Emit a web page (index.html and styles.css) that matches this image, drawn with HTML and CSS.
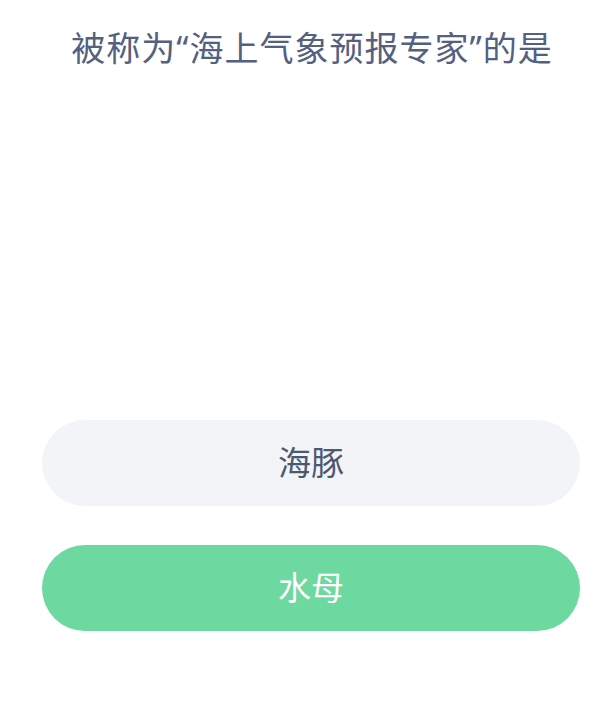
FILE: index.html
```html
<!DOCTYPE html>
<html lang="zh-CN">
<head>
<meta charset="utf-8">
<link rel="stylesheet" href="styles.css">
</head>
<body>
<div class="page">
  <h1 class="question">被称为“海上气象预报专家”的是</h1>
  <div class="picture"></div>
  <div class="options">
    <div class="option option-plain">海豚</div>
    <div class="option option-chosen">水母</div>
  </div>
</div>
</body>
</html>
```
FILE: styles.css
```css
html, body {
  margin: 0;
  padding: 0;
  background: #ffffff;
}
.page {
  width: 612px;
  height: 702px;
  display: flex;
  flex-direction: column;
  font-family: "Noto Sans", "Noto Sans CJK SC", sans-serif;
}
.question {
  margin: 27px 0 0 0;
  padding-left: 12px;
  font-size: 34px;
  line-height: 42px;
  letter-spacing: 1px;
  font-weight: 400;
  color: #54607f;
  text-align: center;
}
.picture {
  height: 351px;
}
.options {
  display: flex;
  flex-direction: column;
  gap: 39px;
  padding: 0 32px 0 42px;
}
.option {
  height: 86px;
  border-radius: 43px;
  display: flex;
  align-items: center;
  justify-content: center;
  font-size: 33px;
  line-height: 40px;
}
.option-plain {
  background: #f3f4f7;
  color: #4b5870;
}
.option-chosen {
  background: #6dd8a0;
  color: #ffffff;
}
```
